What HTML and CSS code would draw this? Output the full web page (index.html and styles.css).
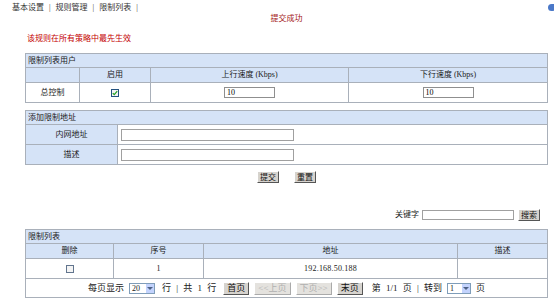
FILE: index.html
```html
<!DOCTYPE html>
<html lang="zh-CN">
<head>
    <meta charset="UTF-8">
    <title>限制列表</title>
    <link rel="stylesheet" href="styles.css">
</head>
<body>
    <div class="topnav">
        <span>基本设置</span><span class="sep">|</span><span>规则管理</span><span class="sep">|</span><span>限制列表</span><span class="sep">|</span>
    </div>
    <span class="corner-icon"></span>

    <div class="main">
        <div class="status">提交成功</div>
        <div class="note">该规则在所有策略中最先生效</div>

        <!-- 限制列表用户 -->
        <table class="grid users">
            <colgroup>
                <col class="u1"><col class="u2"><col class="u3"><col>
            </colgroup>
            <tr class="cap"><td colspan="4">限制列表用户</td></tr>
            <tr class="head">
                <td></td>
                <td>启用</td>
                <td>上行速度 (Kbps)</td>
                <td>下行速度 (Kbps)</td>
            </tr>
            <tr class="row">
                <td>总控制</td>
                <td><span class="check on"><svg viewBox="0 0 8 8" width="6" height="6"><path d="M1 4.2 L3 6.2 L7 1.6" fill="none" stroke="#21a121" stroke-width="1.6"/></svg></span></td>
                <td><input class="speed" type="text" value="10"></td>
                <td><input class="speed" type="text" value="10"></td>
            </tr>
        </table>

        <!-- 添加限制地址 -->
        <table class="grid addr">
            <colgroup>
                <col class="a1"><col>
            </colgroup>
            <tr class="cap"><td colspan="2">添加限制地址</td></tr>
            <tr class="row">
                <td class="label">内网地址</td>
                <td class="field"><input class="wide" type="text"></td>
            </tr>
            <tr class="row">
                <td class="label">描述</td>
                <td class="field"><input class="wide" type="text"></td>
            </tr>
        </table>

        <div class="actions">
            <button class="btn">提交</button>
            <button class="btn">重置</button>
        </div>

        <div class="search">
            <span>关键字</span>
            <input class="keyword" type="text">
            <button class="btn">搜索</button>
        </div>

        <!-- 限制列表 -->
        <table class="grid list">
            <colgroup>
                <col class="l1"><col class="l2"><col class="l3"><col>
            </colgroup>
            <tr class="cap"><td colspan="4">限制列表</td></tr>
            <tr class="head">
                <td>删除</td>
                <td>序号</td>
                <td>地址</td>
                <td>描述</td>
            </tr>
            <tr class="row">
                <td><span class="check"></span></td>
                <td>1</td>
                <td class="ip">192.168.50.188</td>
                <td></td>
            </tr>
            <tr class="pager">
                <td colspan="4">
                    <div class="pager-bar">
                        <span>每页显示</span>
                        <span class="select"><span class="val">20</span><span class="arrow"></span></span>
                        <span class="count">行 | 共 1 行</span>
                        <button class="btn">首页</button>
                        <button class="btn" disabled>&lt;&lt;上页</button>
                        <button class="btn" disabled>下页&gt;&gt;</button>
                        <button class="btn">末页</button>
                        <span class="jump">第 1/1 页 | 转到</span>
                        <span class="select small"><span class="val">1</span><span class="arrow"></span></span>
                        <span>页</span>
                    </div>
                </td>
            </tr>
        </table>
    </div>
</body>
</html>
```

FILE: styles.css
```css
body {
    margin: 0;
    font-family: "Liberation Serif", "Noto Sans CJK SC", serif;
    font-size: 8px;
    color: #222;
    background-color: #fff;
}

.topnav {
    padding: 3px 0 0 12px;
    height: 10px;
    line-height: 10px;
    color: #333;
}

.topnav .sep {
    margin: 0 5px;
}

.corner-icon {
    position: absolute;
    top: 4px;
    left: 548px;
    width: 8px;
    height: 7px;
    border-radius: 4px 0 4px 4px;
    background-color: #4a78c8;
}

.main {
    width: 523px;
    margin-left: 25px;
}

.status {
    margin-top: 1px;
    text-align: center;
    color: #a31515;
    line-height: 10px;
}

.note {
    margin: 10px 0 9px 2px;
    color: #c40000;
    line-height: 10px;
}

/* tables */
.grid {
    width: 100%;
    border-collapse: collapse;
    table-layout: fixed;
}

.grid td {
    border: 1px solid #a9b0ba;
    padding: 0;
    text-align: center;
    line-height: 10px;
    color: #1a1a1a;
}

.grid .cap td {
    height: 13px;
    text-align: left;
    padding-left: 2px;
    background-color: #d5e3f7;
}

.grid .head td {
    height: 14px;
    background-color: #d5e3f7;
}

.grid .row td {
    height: 19px;
}

.users .u1 { width: 54px; }
.users .u2 { width: 71px; }
.users .u3 { width: 198px; }

.speed {
    box-sizing: border-box;
    width: 51px;
    height: 11px;
    padding: 0 2px;
    border: 1px solid #8f8f8f;
    font-family: inherit;
    font-size: 8px;
    vertical-align: middle;
}

.check {
    display: inline-block;
    box-sizing: border-box;
    width: 8px;
    height: 8px;
    border: 1px solid #62758e;
    background-color: #f4f4f4;
    vertical-align: middle;
    line-height: 0;
}

.check.on {
    border-color: #24527f;
}

.check svg {
    display: block;
}

.addr {
    margin-top: 7px;
}

.addr .a1 { width: 92px; }

.addr .label {
    background-color: #d5e3f7;
}

.addr .field {
    text-align: left;
    padding-left: 3px;
}

.wide {
    box-sizing: border-box;
    width: 173px;
    height: 12px;
    border: 1px solid #a0a0a0;
    vertical-align: middle;
}

/* buttons */
.btn {
    box-sizing: border-box;
    height: 12px;
    padding: 0 2px;
    margin: 0;
    font-family: inherit;
    font-size: 8px;
    line-height: 9px;
    color: #111;
    background-color: #d6d3ce;
    border: 1px solid;
    border-color: #fff #555 #555 #fff;
    vertical-align: middle;
}

.btn:disabled {
    color: #b0b0b0;
    background-color: #e4e2de;
    border-color: #fff #aaa #aaa #fff;
}

.actions {
    margin-top: 6px;
    text-align: center;
    font-size: 0;
}

.actions .btn + .btn {
    margin-left: 15px;
}

.search {
    margin-top: 26px;
    padding-right: 8px;
    text-align: right;
    line-height: 12px;
}

.keyword {
    box-sizing: border-box;
    width: 92px;
    height: 10px;
    margin: 0 2px 0 1px;
    border: 1px solid #a0a0a0;
    vertical-align: middle;
}

.list {
    margin-top: 8px;
}

.list .l1 { width: 88px; }
.list .l2 { width: 90px; }
.list .l3 { width: 254px; }

.ip {
    letter-spacing: 0.2px;
}

/* pager */
.grid .pager td {
    height: 18px;
}

.pager-bar {
    display: flex;
    justify-content: center;
    align-items: center;
    gap: 5px;
    font-size: 9px;
    white-space: nowrap;
    word-spacing: 3px;
}

.pager-bar .count {
    margin: 0 2px;
}

.pager-bar .jump {
    margin-left: 4px;
}

.pager-bar .btn {
    height: 13px;
    padding: 0 3px;
    font-size: 9px;
    word-spacing: 0;
}

.select {
    display: inline-block;
    box-sizing: border-box;
    width: 26px;
    height: 11px;
    border: 1px solid #7f9db9;
    text-align: left;
    position: relative;
    line-height: 9px;
    font-size: 8px;
}

.select.small {
    width: 24px;
}

.select .val {
    padding-left: 2px;
}

.select .arrow {
    position: absolute;
    top: 0;
    right: 0;
    width: 8px;
    height: 9px;
    background-color: #c3d3fd;
}

.select .arrow::after {
    content: "";
    position: absolute;
    top: 3px;
    left: 1px;
    width: 0;
    height: 0;
    border-left: 3px solid transparent;
    border-right: 3px solid transparent;
    border-top: 3px solid #4d6185;
}
```
